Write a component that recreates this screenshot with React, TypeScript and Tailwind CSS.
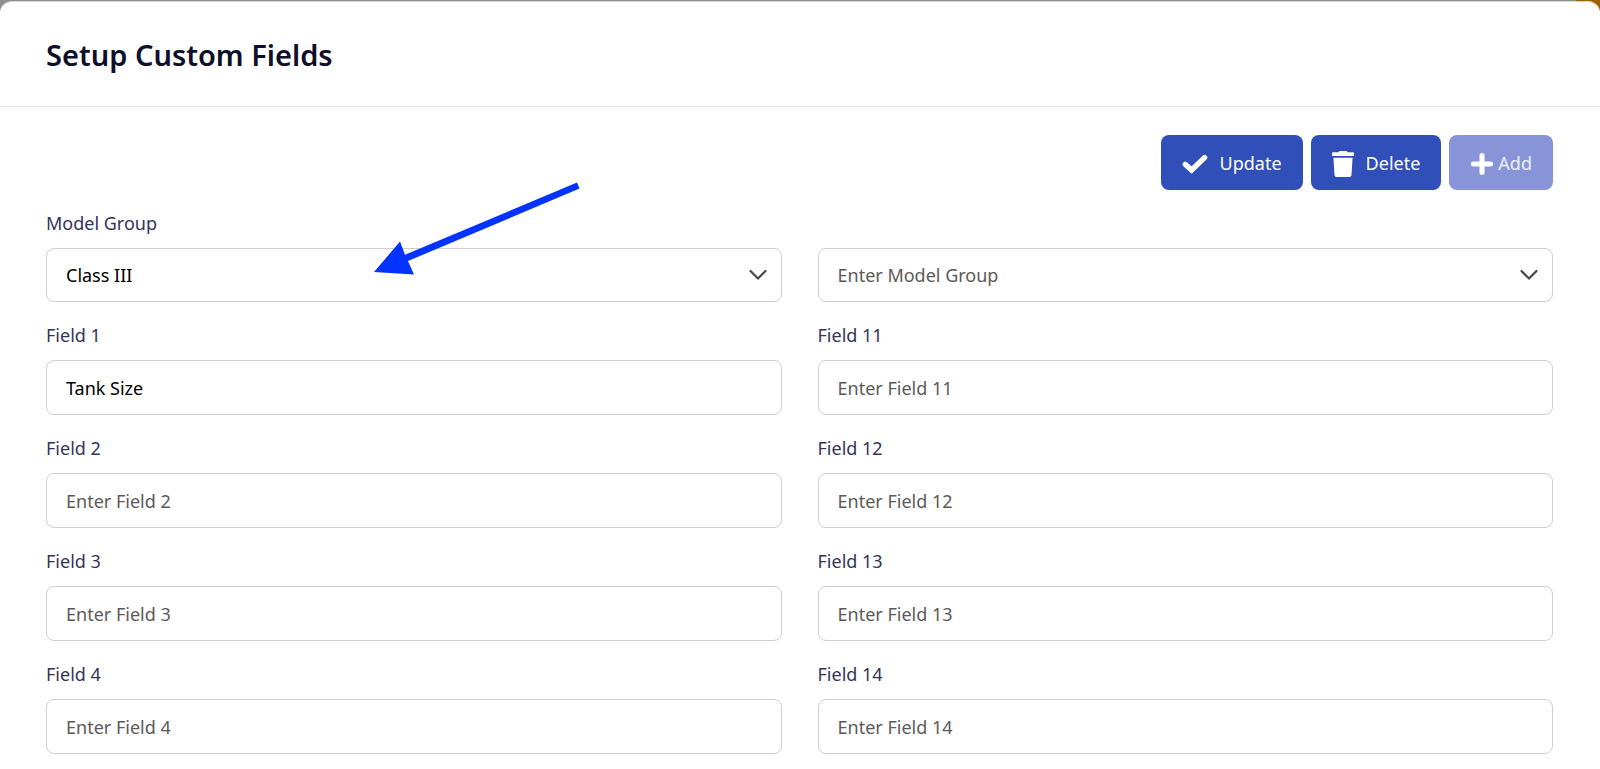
import { useState } from 'react';

const leftFields = [1, 2, 3, 4];
const rightFields = [11, 12, 13, 14];

const labelClass = 'block h-7 mb-[10px] text-lg leading-[26px] text-[#34345a]';
const boxClass = 'block w-full rounded-lg border border-[#cfcfcf] bg-white px-[19px] text-lg';
const buttonClass = 'flex h-[55px] items-center rounded-lg px-[21px] text-lg';

function Chevron() {
  return (
    <svg
      className="pointer-events-none absolute right-[15px] top-[21px]"
      width="18"
      height="12"
      viewBox="0 0 18 12"
      fill="none"
      stroke="#484848"
      strokeWidth="2.2"
      strokeLinecap="round"
      strokeLinejoin="round"
    >
      <path d="M1.5 2 L9 9.6 L16.5 2" />
    </svg>
  );
}

function GroupSelect({ id, label, options, placeholder }: any) {
  const [selected, setSelected] = useState(placeholder ? '' : options[0]);

  return (
    <div>
      <label htmlFor={id} className={labelClass}>
        {label}
      </label>
      <div className="relative">
        <select
          id={id}
          aria-label={label || placeholder}
          value={selected}
          onChange={(e) => setSelected(e.target.value)}
          className={`${boxClass} h-[54px] appearance-none ${selected ? 'text-black' : 'text-[#5c5a58]'}`}
        >
          {placeholder && <option value="">{placeholder}</option>}
          {options.map((o: string) => (
            <option key={o}>{o}</option>
          ))}
        </select>
        <Chevron />
      </div>
    </div>
  );
}

function Field({ n, value, onChange }: any) {
  return (
    <div>
      <label htmlFor={`field-${n}`} className={labelClass}>
        Field {n}
      </label>
      <input
        id={`field-${n}`}
        type="text"
        value={value}
        onChange={(e) => onChange(n, e.target.value)}
        placeholder={`Enter Field ${n}`}
        className={`${boxClass} h-[55px] text-black placeholder:text-[#5c5a58]`}
      />
    </div>
  );
}

export default function App() {
  const [values, setValues] = useState<any>({ 1: 'Tank Size' });

  const handleChange = (n: number, v: string) => {
    setValues({ ...values, [n]: v });
  };

  return (
    <div className="min-h-screen bg-[linear-gradient(to_left,#a06000_24px,#909090_24px)] pt-px font-['Noto_Sans',sans-serif]">
      <main className="min-h-screen rounded-t-xl border-t border-[#d4d4d4] bg-white">
        <header className="flex h-[105px] items-center border-b border-[#e6e6ee] px-[46px] pt-0.5">
          <h1 className="text-[29px] leading-9 font-semibold text-[#0d0f2b]">Setup Custom Fields</h1>
        </header>

        <div className="relative pl-[46px] pr-[47px] pt-7 pb-4">
          {/* Toolbar */}
          <div className="mb-5 flex justify-end gap-2">
            <button className={`${buttonClass} gap-3 bg-[#304fb8] text-white`}>
              <svg className="mt-0.5" width="26" height="20" viewBox="0 0 26 20" fill="none" stroke="white" strokeWidth="5.4" strokeLinecap="round">
                <path d="M3.4 10.4 L9.7 16 L22.6 3.6" strokeLinejoin="miter" />
              </svg>
              Update
            </button>
            <button className={`${buttonClass} gap-3 bg-[#304fb8] text-white`}>
              <svg className="mt-0.5" width="22" height="26" viewBox="0 0 22 26" fill="white">
                <path d="M1 1.2 H6.4 L7.6 0 H14.4 L15.6 1.2 H21 Q22 1.2 22 2.2 V5 H0 V2.2 Q0 1.2 1 1.2 Z" />
                <path d="M1.4 6.8 H20.6 L19.5 24 Q19.3 26 17.4 26 H4.6 Q2.7 26 2.5 24 Z" />
              </svg>
              Delete
            </button>
            <button disabled className={`${buttonClass} gap-1 bg-[#8795d8] text-[#eef0fb]`}>
              <svg className="mt-0.5" width="24" height="24" viewBox="0 0 24 24" stroke="white" strokeWidth="5" strokeLinecap="round">
                <path d="M12 3.4 V20.6 M3.4 12 H20.6" />
              </svg>
              Add
            </button>
          </div>

          {/* Custom fields, two columns */}
          <div className="grid grid-cols-2 gap-9">
            <div className="flex flex-col gap-5">
              <GroupSelect id="model-group" label="Model Group" options={['Class III']} />
              {leftFields.map((n) => (
                <Field key={n} n={n} value={values[n] || ''} onChange={handleChange} />
              ))}
            </div>
            <div className="flex flex-col gap-5">
              <GroupSelect id="model-group-new" label="" placeholder="Enter Model Group" options={[]} />
              {rightFields.map((n) => (
                <Field key={n} n={n} value={values[n] || ''} onChange={handleChange} />
              ))}
            </div>
          </div>

          {/* Pointer to the selected group */}
          <svg
            className="pointer-events-none absolute left-[373px] top-[75px]"
            width="208"
            height="94"
            viewBox="0 0 208 94"
            fill="#0433ff"
          >
            <path d="M1 90 L27 59.5 L32 72.8 L204 0.6 L206.5 6.6 L35 79 L41 92.5 Z" />
          </svg>
        </div>
      </main>
    </div>
  );
}
